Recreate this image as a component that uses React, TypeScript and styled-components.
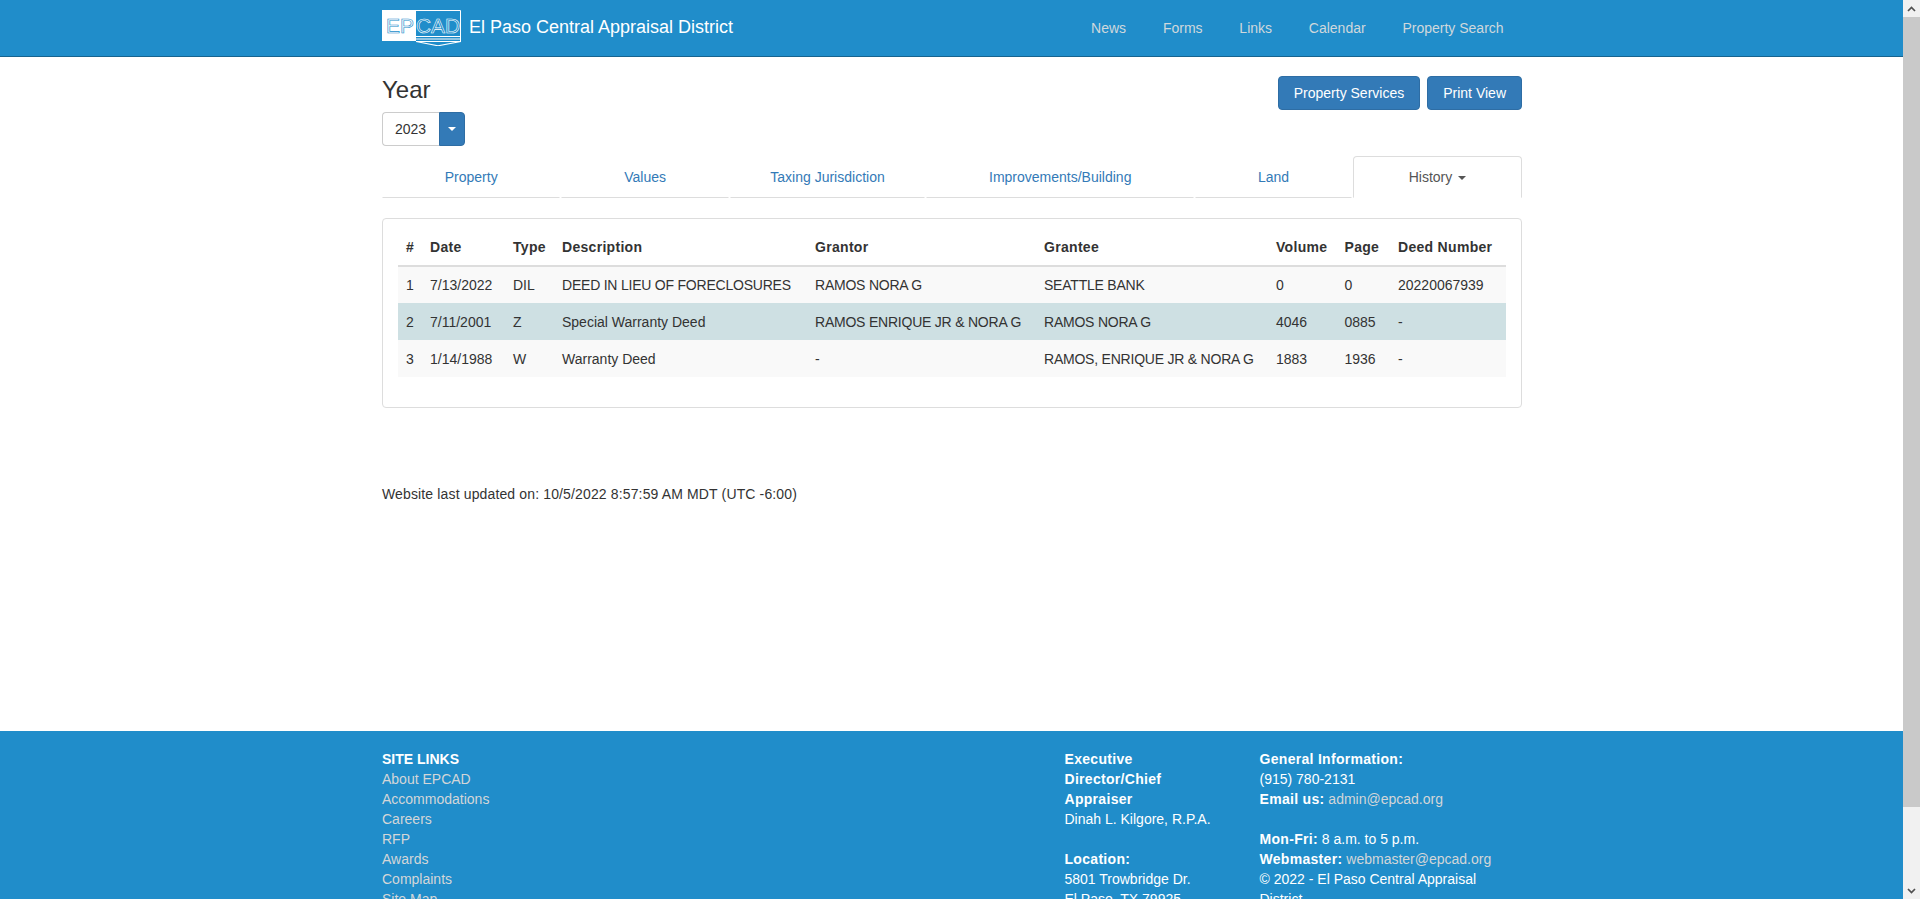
import React from "react";
import styled, { createGlobalStyle } from "styled-components";

const Global = createGlobalStyle`
  * { box-sizing: border-box; }
  body { margin: 0 16px 0 0; font-family: "Liberation Sans", Arial, sans-serif; font-size: 14px; line-height: 20px; color: #333; background: #fff; }
  a { text-decoration: none; }
`;

const Container = styled.div`
  width: 1170px;
  margin: 0 auto;
  padding: 0 15px;
`;

const Navbar = styled.header`
  height: 57px;
  background: #208dca;
  border-bottom: 1px solid #17648f;
`;

const NavInner = styled(Container)`
  display: flex;
  align-items: center;
  justify-content: space-between;
  height: 56px;
`;

const Brand = styled.a`
  display: flex;
  align-items: flex-start;
  gap: 8px;
  height: 56px;
  padding-top: 10px;
  color: #fff;
  font-size: 18px;
  line-height: 35px;
`;

const NavLinks = styled.nav`
  display: flex;
`;

const NavLink = styled.a`
  padding: 18px 18.4px;
  color: #cfd8dc;
  font-size: 14px;
  line-height: 20px;
`;

const TopRow = styled.div`
  display: flex;
  justify-content: space-between;
  align-items: flex-start;
  padding-top: 19px;
`;

const YearBlock = styled.div`
  display: flex;
  flex-direction: column;
  align-items: flex-start;
`;

const YearTitle = styled.h3`
  margin: -1px 0 7px;
  font-size: 24px;
  line-height: 30px;
  font-weight: 500;
`;

const YearSelect = styled.div`
  display: flex;
  height: 34px;
`;

const YearValue = styled.div`
  width: 57px;
  padding: 6px 12px;
  border: 1px solid #ccc;
  border-right: 0;
  border-radius: 4px 0 0 4px;
`;

const YearCaretBtn = styled.div`
  width: 26px;
  display: flex;
  align-items: center;
  justify-content: center;
  background: #337ab7;
  border: 1px solid #2e6da4;
  border-radius: 0 4px 4px 0;
`;

const Caret = styled.span<{ $color: string; $inline?: boolean }>`
  display: inline-block;
  width: 0;
  height: 0;
  margin-left: ${(p) => (p.$inline ? "2px" : "0")};
  vertical-align: middle;
  border-top: 4px solid ${(p) => p.$color};
  border-left: 4px solid transparent;
  border-right: 4px solid transparent;
`;

const Actions = styled.div`
  display: flex;
  gap: 7px;
`;

const Button = styled.a`
  display: block;
  height: 34px;
  padding: 6px 15px;
  color: #fff;
  background: #337ab7;
  border: 1px solid #2e6da4;
  border-radius: 4px;
`;

const Tabs = styled.ul`
  display: table;
  table-layout: auto;
  width: 100%;
  margin: 10px 0 0;
  padding: 0;
  list-style: none;
`;

const Tab = styled.li<{ $active?: boolean }>`
  display: table-cell;
  width: 1%;
  text-align: center;
  vertical-align: bottom;
  a {
    display: block;
    padding: 10px 15px;
    line-height: 20px;
    height: 42px;
    color: ${(p) => (p.$active ? "#555" : "#337ab7")};
    border: 1px solid ${(p) => (p.$active ? "#ddd" : "transparent")};
    border-bottom: 1px solid ${(p) => (p.$active ? "#fff" : "#ddd")};
    border-radius: ${(p) => (p.$active ? "4px 4px 0 0" : "0")};
    margin-right: ${(p) => (p.$active ? "0" : "1px")};
  }
`;

const Panel = styled.section`
  margin-top: 20px;
  height: 190px;
  padding: 10px 15px 0;
  border: 1px solid #ddd;
  border-radius: 4px;
`;

const Table = styled.table`
  width: 100%;
  table-layout: fixed;
  border-collapse: collapse;
  border-spacing: 0;
`;

const Th = styled.th<{ $w: number }>`
  width: ${(p) => p.$w}px;
  padding: 8px;
  text-align: left;
  vertical-align: bottom;
  font-weight: 700;
  letter-spacing: 0.3px;
  border-bottom: 2px solid #ddd;
  white-space: nowrap;
`;

const Tr = styled.tr<{ $highlight?: boolean; $odd?: boolean }>`
  background: ${(p) => (p.$highlight ? "#cee0e3" : p.$odd ? "#f9f9f9" : "#fff")};
`;

const Td = styled.td<{ $caps: boolean }>`
  padding: 8px;
  height: 37px;
  white-space: nowrap;
  letter-spacing: ${(p) => (p.$caps ? "-0.22px" : "0")};
`;

const Updated = styled.p`
  margin: 76px 0 0;
  letter-spacing: 0.14px;
`;

const Footer = styled.footer`
  margin-top: 227px;
  height: 254px;
  padding-top: 18px;
  background: #208dca;
  color: #fff;
  overflow: hidden;
`;

const FooterRow = styled.div`
  display: grid;
  grid-template-columns: 682.5px 195px 262.5px;
`;

const FooterColumn = styled.div`
  padding-right: 40px;
  &:last-child { padding-right: 0; }
`;

const FootHead = styled.strong`
  display: block;
  font-weight: 700;
`;

const Label = styled.strong`
  font-weight: 700;
  letter-spacing: 0.3px;
`;

const BlockLabel = styled(Label)`
  display: block;
`;

const FootLink = styled.a`
  display: block;
  color: #d3d6d8;
`;

const InlineLink = styled.a`
  color: #d3d6d8;
`;

const Blank = styled.div`
  height: 20px;
`;

const Scrollbar = styled.div`
  position: fixed;
  top: 0;
  right: 0;
  bottom: 0;
  width: 17px;
  background: #f1f1f1;
  display: flex;
  flex-direction: column;
`;

const ScrollArrow = styled.div`
  height: 17px;
  flex: none;
  display: flex;
  align-items: center;
  justify-content: center;
`;

const ScrollTrack = styled.div`
  flex: 1;
`;

const ScrollThumb = styled.div`
  height: 790px;
  background: #c9c9c9;
`;

const Chevron = ({ up }: { up?: boolean }) => (
  <svg width="9" height="6" viewBox="0 0 9 6">
    <path d={up ? "M1 5l3.5-3.5L8 5" : "M1 1l3.5 3.5L8 1"} fill="none" stroke="#505050" strokeWidth="1.7" />
  </svg>
);

const Logo = () => (
  <svg width="79" height="36" viewBox="0 0 79 36" aria-label="EPCAD" style={{ display: "block", flex: "none" }}>
    <rect x="0" y="0" width="34" height="31" fill="#fff" />
    <path d="M34 .5h44.5v31" fill="none" stroke="#fff" strokeWidth="1" />
    <text x="4" y="23" fontFamily="Liberation Sans, sans-serif" fontSize="21" fill="none" stroke="#208dca" strokeWidth="0.65" textLength="28" lengthAdjust="spacingAndGlyphs">EP</text>
    <text x="34" y="23" fontFamily="Liberation Sans, sans-serif" fontSize="21" fill="none" stroke="#fff" strokeWidth="0.6" textLength="44" lengthAdjust="spacingAndGlyphs">CAD</text>
    <path d="M34 26.5h45M34 29h45M34 31.5h45" stroke="#fff" strokeWidth="1" />
    <path d="M34 31.5l22 4.3 23-4.3" fill="none" stroke="#fff" strokeWidth="1.1" />
  </svg>
);

const rows = [
  ["1", "7/13/2022", "DIL", "DEED IN LIEU OF FORECLOSURES", "RAMOS NORA G", "SEATTLE BANK", "0", "0", "20220067939"],
  ["2", "7/11/2001", "Z", "Special Warranty Deed", "RAMOS ENRIQUE JR & NORA G", "RAMOS NORA G", "4046", "0885", "-"],
  ["3", "1/14/1988", "W", "Warranty Deed", "-", "RAMOS, ENRIQUE JR & NORA G", "1883", "1936", "-"],
];

const heads: [string, number][] = [
  ["#", 24], ["Date", 83], ["Type", 49], ["Description", 253], ["Grantor", 229],
  ["Grantee", 232], ["Volume", 68.5], ["Page", 53.5], ["Deed Number", 116],
];

const isCaps = (s: string) => /[A-Z]/.test(s) && s === s.toUpperCase() && s.length > 3;

export default function App() {
  return (
    <>
      <Global />
      <Navbar>
        <NavInner>
          <Brand href="#">
            <Logo />
            El Paso Central Appraisal District
          </Brand>
          <NavLinks>
            {["News", "Forms", "Links", "Calendar", "Property Search"].map((l) => (
              <NavLink key={l} href="#">{l}</NavLink>
            ))}
          </NavLinks>
        </NavInner>
      </Navbar>
      <Container>
        <TopRow>
          <YearBlock>
            <YearTitle>Year</YearTitle>
            <YearSelect>
              <YearValue>2023</YearValue>
              <YearCaretBtn><Caret $color="#fff" /></YearCaretBtn>
            </YearSelect>
          </YearBlock>
          <Actions>
            <Button href="#">Property Services</Button>
            <Button href="#">Print View</Button>
          </Actions>
        </TopRow>
        <Tabs>
          {["Property", "Values", "Taxing Jurisdiction", "Improvements/Building", "Land"].map((t) => (
            <Tab key={t}><a href="#">{t}</a></Tab>
          ))}
          <Tab $active><a href="#">History <Caret $color="#555" $inline /></a></Tab>
        </Tabs>
        <Panel>
          <Table>
            <thead>
              <tr>{heads.map(([h, w]) => <Th key={h} $w={w}>{h}</Th>)}</tr>
            </thead>
            <tbody>
              {rows.map((r, i) => (
                <Tr key={r[0]} $odd={i % 2 === 0} $highlight={i === 1}>
                  {r.map((c, j) => <Td key={j} $caps={isCaps(c)}>{c}</Td>)}
                </Tr>
              ))}
            </tbody>
          </Table>
        </Panel>
        <Updated>Website last updated on: 10/5/2022 8:57:59 AM MDT (UTC -6:00)</Updated>
      </Container>
      <Footer>
        <Container>
          <FooterRow>
            <FooterColumn>
              <FootHead>SITE LINKS</FootHead>
              {["About EPCAD", "Accommodations", "Careers", "RFP", "Awards", "Complaints", "Site Map"].map((l) => (
                <FootLink key={l} href="#">{l}</FootLink>
              ))}
            </FooterColumn>
            <FooterColumn>
              <BlockLabel>Executive Director/Chief Appraiser</BlockLabel>
              <div>Dinah L. Kilgore, R.P.A.</div>
              <Blank />
              <BlockLabel>Location:</BlockLabel>
              <div>5801 Trowbridge Dr.</div>
              <div>El Paso, TX 79925</div>
            </FooterColumn>
            <FooterColumn>
              <BlockLabel>General Information:</BlockLabel>
              <div>(915) 780-2131</div>
              <div><Label>Email us:</Label> <InlineLink href="#">admin@epcad.org</InlineLink></div>
              <Blank />
              <div><Label>Mon-Fri:</Label> 8 a.m. to 5 p.m.</div>
              <div><Label>Webmaster:</Label> <InlineLink href="#">webmaster@epcad.org</InlineLink></div>
              <div>© 2022 - El Paso Central Appraisal District</div>
            </FooterColumn>
          </FooterRow>
        </Container>
      </Footer>
      <Scrollbar aria-hidden="true">
        <ScrollArrow><Chevron up /></ScrollArrow>
        <ScrollTrack><ScrollThumb /></ScrollTrack>
        <ScrollArrow><Chevron /></ScrollArrow>
      </Scrollbar>
    </>
  );
}
